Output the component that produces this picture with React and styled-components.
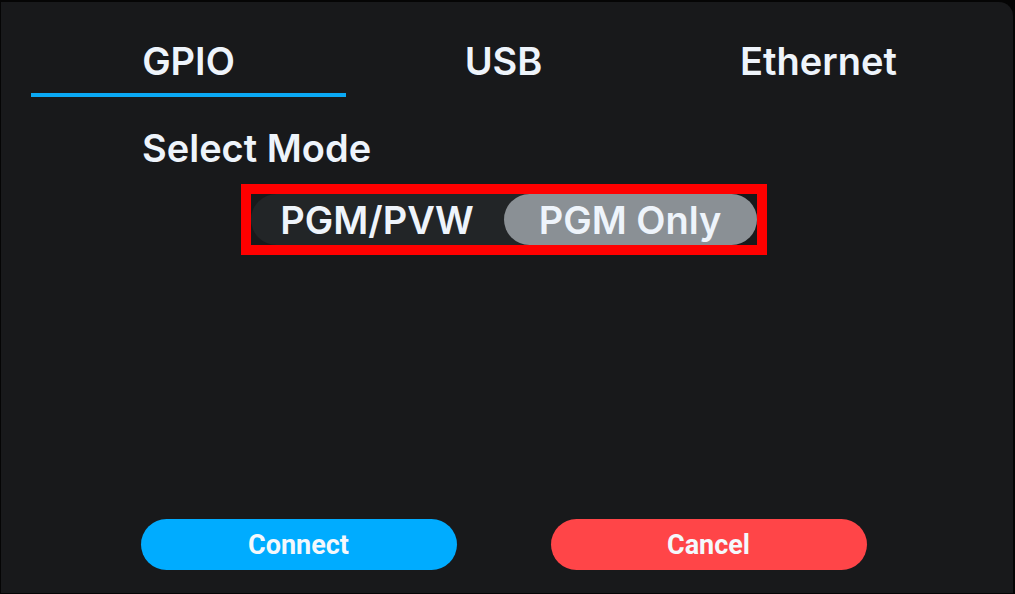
import React, { useState } from "react";
import styled, { createGlobalStyle } from "styled-components";

const GlobalStyle = createGlobalStyle`
  html, body {
    margin: 0;
    padding: 0;
    background: #050505;
    height: 100%;
  }
  #root {
    height: 100%;
  }
`;

const tabs = ["GPIO", "USB", "Ethernet"];
const modes = ["PGM/PVW", "PGM Only"];

const App = () => {
  const [activeTab, setActiveTab] = useState(0);
  const [mode, setMode] = useState(1);

  return (
    <>
      <GlobalStyle />
      <Panel>
        <TabRow>
          {tabs.map((label, i) => (
            <Tab key={label} $active={activeTab === i} onClick={() => setActiveTab(i)}>
              {label}
            </Tab>
          ))}
        </TabRow>
        <Content>
          <Heading>Select Mode</Heading>
          <ToggleRow>
            <Highlight>
              <Track>
                {modes.map((m, i) => (
                  <Option key={m} $active={mode === i} onClick={() => setMode(i)}>
                    {m}
                  </Option>
                ))}
              </Track>
            </Highlight>
          </ToggleRow>
        </Content>
        <Footer>
          <Button $color="#00acff">Connect</Button>
          <Button $color="#ff4548">Cancel</Button>
        </Footer>
      </Panel>
    </>
  );
};

const Panel = styled.div`
  box-sizing: border-box;
  height: calc(100% - 3px);
  margin: 2px 2px 1px 1px;
  padding: 0 37px 23px 30px;
  background: #18191b;
  border-radius: 0 14px 0 0;
  display: flex;
  flex-direction: column;
  font-family: Inter, "Noto Sans", sans-serif;
  color: #eef4fb;
`;

const TabRow = styled.div`
  display: flex;
  padding-top: 37px;
`;

const Tab = styled.div`
  width: 315px;
  text-align: center;
  font-size: 38px;
  font-weight: 600;
  line-height: 44px;
  padding-bottom: 10px;
  border-bottom: 4px solid ${(p) => (p.$active ? "#0aa9f5" : "transparent")};
  cursor: pointer;
`;

const Content = styled.div`
  display: flex;
  flex-direction: column;
`;

const Heading = styled.div`
  margin-top: 28px;
  padding-left: 111px;
  font-size: 38px;
  font-weight: 600;
  line-height: 46px;
`;

const ToggleRow = styled.div`
  display: flex;
  justify-content: center;
  margin-top: 13px;
`;

const Highlight = styled.div`
  border: 10px solid #ff0000;
`;

const Track = styled.div`
  display: flex;
  width: 506px;
  height: 51px;
  background: #222527;
  border-radius: 26px;
`;

const Option = styled.div`
  flex: 1;
  display: flex;
  align-items: center;
  justify-content: center;
  border-radius: 26px;
  background: ${(p) => (p.$active ? "#8a9095" : "transparent")};
  font-size: 38px;
  font-weight: 600;
  cursor: pointer;
`;

const Footer = styled.div`
  margin-top: auto;
  display: flex;
  justify-content: center;
  gap: 94px;
`;

const Button = styled.button`
  width: 316px;
  height: 51px;
  border: none;
  border-radius: 26px;
  background: ${(p) => p.$color};
  color: #f4f8fc;
  font-family: Roboto, "Liberation Sans", sans-serif;
  font-size: 27px;
  font-weight: 700;
  cursor: pointer;
`;

export default App;
